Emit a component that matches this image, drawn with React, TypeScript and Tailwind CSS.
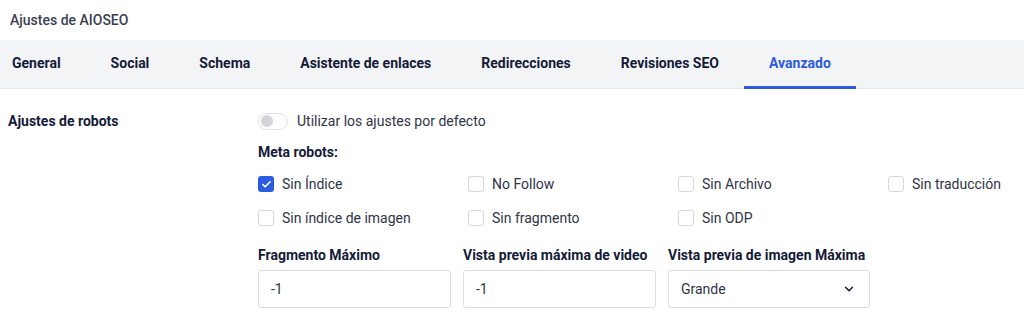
import React, { useState } from 'react';
import { Check, ChevronDown } from 'lucide-react';

const tabs = ['General', 'Social', 'Schema', 'Asistente de enlaces', 'Redirecciones', 'Revisiones SEO', 'Avanzado'];

const robots = [
    { label: 'Sin Índice', checked: true },
    { label: 'No Follow', checked: false },
    { label: 'Sin Archivo', checked: false },
    { label: 'Sin traducción', checked: false },
    { label: 'Sin índice de imagen', checked: false },
    { label: 'Sin fragmento', checked: false },
    { label: 'Sin ODP', checked: false },
];

const Checkbox = ({ label, checked }: { label: string; checked: boolean }) => (
    <label className="flex items-center h-[18px]">
        {checked ? (
            <span className="w-4 h-4 rounded-[3px] bg-[#2c5ae0] flex items-center justify-center">
                <Check size={11} strokeWidth={3.5} className="text-white" />
            </span>
        ) : (
            <span className="w-4 h-4 rounded-[3px] border border-[#d6d8de] bg-white" />
        )}
        <span className="ml-[8px] text-sm text-[#2f3447]">{label}</span>
    </label>
);

export default function App() {
    const [active] = useState('Avanzado');

    return (
        <div className="w-[1024px] h-[320px] bg-white overflow-hidden" style={{ fontFamily: 'Roboto, "Noto Sans", sans-serif' }}>
            <div className="h-10 flex items-center pl-[10px] text-sm font-medium text-[#3a3f52]">
                Ajustes de AIOSEO
            </div>

            <div className="h-[49px] bg-[#f3f4f6] border-b border-[#e5e7eb] flex">
                {tabs.map((tab, i) => (
                    <div
                        key={tab}
                        className={`${i === 0 ? 'pl-3' : 'pl-[25px]'} pr-[25px] flex items-center text-sm font-bold border-b-[3px] -mb-px ${
                            tab === active ? 'text-[#2c5ae0] border-[#2c5ae0]' : 'text-[#141b38] border-transparent'
                        }`}
                    >
                        {tab}
                    </div>
                ))}
            </div>

            <div className="grid grid-cols-[258px_1fr] pt-[22px]">
                <div className="pl-2 text-sm font-bold text-[#141b38] leading-[20px]">Ajustes de robots</div>

                <div>
                    <div className="flex items-center h-[20px]">
                        <span className="w-[30px] h-[17px] rounded-full border border-[#e2e3e8] bg-white flex items-center pl-[2px]">
                            <span className="w-[12px] h-[12px] rounded-full bg-[#d4d5da]" />
                        </span>
                        <span className="ml-[9px] text-sm text-[#2f3447]">Utilizar los ajustes por defecto</span>
                    </div>

                    <div className="mt-[11px] text-sm font-bold text-[#141b38] leading-[20px]">Meta robots:</div>

                    <div className="mt-[13px] grid grid-cols-[210px_210px_210px_1fr] gap-y-[16px]">
                        {robots.map((r) => (
                            <Checkbox key={r.label} label={r.label} checked={r.checked} />
                        ))}
                    </div>

                    <div className="mt-[18px] flex gap-[12px]">
                        {[
                            { label: 'Fragmento Máximo', value: '-1' },
                            { label: 'Vista previa máxima de video', value: '-1' },
                        ].map((f) => (
                            <div key={f.label} className="w-[193px]">
                                <div className="text-sm font-bold text-[#141b38] leading-[20px] whitespace-nowrap">{f.label}</div>
                                <div className="mt-[5px] h-[38px] border border-[#dcdde2] rounded-[3px] flex items-center px-3 text-sm text-[#2f3447]">
                                    {f.value}
                                </div>
                            </div>
                        ))}
                        <div className="w-[202px]">
                            <div className="text-sm font-bold text-[#141b38] leading-[20px] whitespace-nowrap">Vista previa de imagen Máxima</div>
                            <div className="mt-[5px] h-[38px] border border-[#dcdde2] rounded-[3px] flex items-center justify-between pl-3 pr-[13px] text-sm text-[#2f3447]">
                                Grande
                                <ChevronDown size={14} strokeWidth={2.5} className="text-[#141b38]" />
                            </div>
                        </div>
                    </div>
                </div>
            </div>
        </div>
    );
}
